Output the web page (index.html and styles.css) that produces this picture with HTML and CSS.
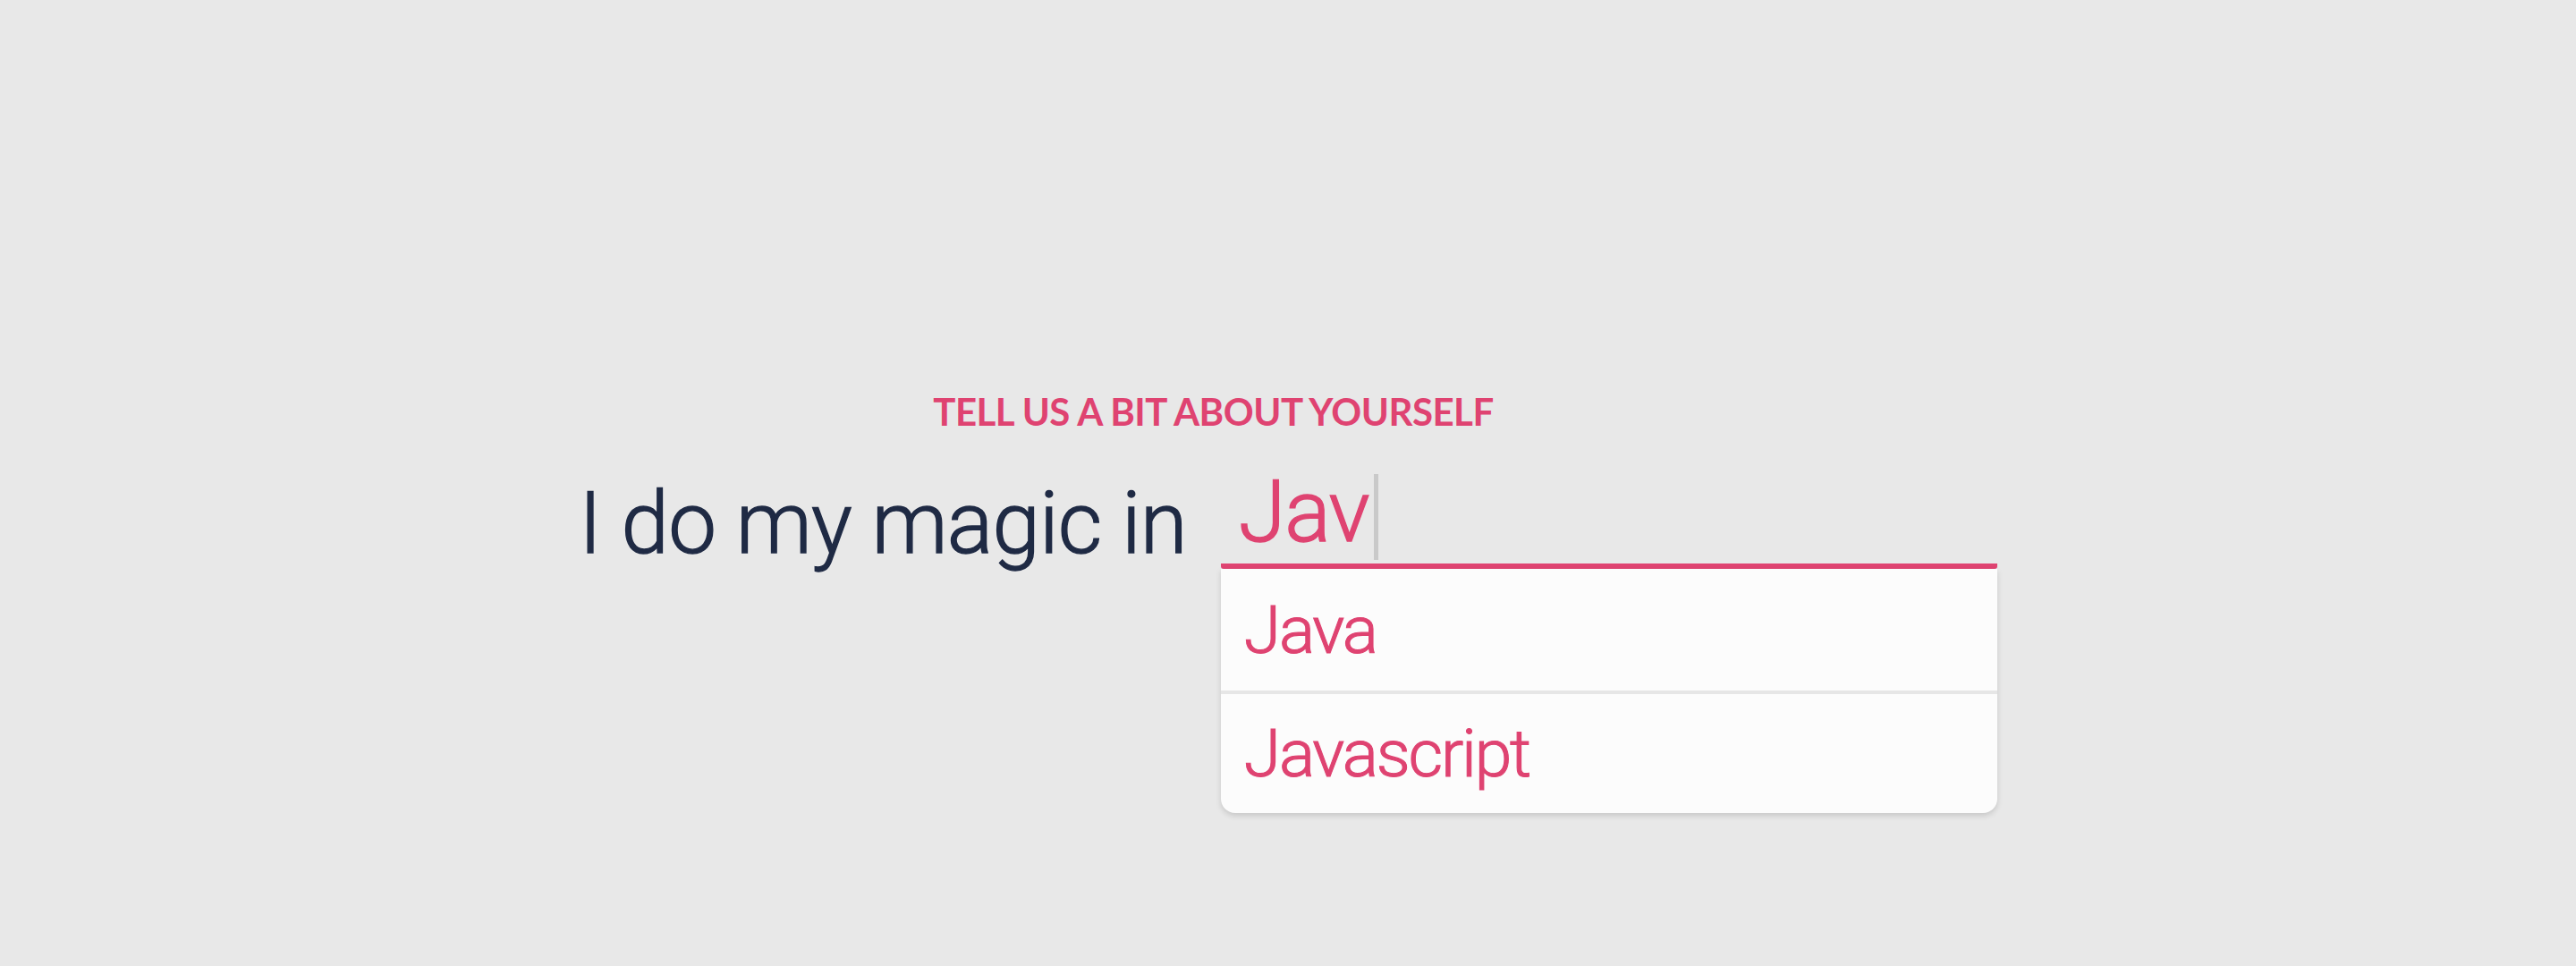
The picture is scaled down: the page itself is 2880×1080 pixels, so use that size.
FILE: index.html
```html
<!DOCTYPE html>
<html lang="en">
<head>
<meta charset="utf-8">
<title>Tell us a bit about yourself</title>
<link rel="stylesheet" href="styles.css">
</head>
<body>
<main class="page">
  <form class="form" onsubmit="return false">
    <label class="label" for="lang">TELL US A BIT ABOUT YOURSELF</label>
    <div class="row">
      <span class="sentence">I do my magic in</span>
      <div class="field">
        <div class="input-line" id="lang">
          <span class="typed">Jav</span><span class="caret"></span>
        </div>
        <ul class="dropdown">
          <li class="option">Java</li>
          <li class="option">Javascript</li>
        </ul>
      </div>
    </div>
  </form>
</main>
</body>
</html>
```
FILE: styles.css
```css
html, body {
  margin: 0;
  padding: 0;
}
body {
  background: #e8e8e8;
  width: 2880px;
  height: 1080px;
  overflow: hidden;
  font-family: Roboto, "Liberation Sans", sans-serif;
}
.page {
  display: flex;
  justify-content: center;
  padding-top: 440px;
}
.form {
  display: flex;
  flex-direction: column;
}
.label {
  align-self: flex-start;
  margin-left: 396px;
  font-family: Lato, "Open Sans", sans-serif;
  font-weight: 700;
  font-size: 42px;
  line-height: 40px;
  color: #df4371;
  letter-spacing: -0.5px;
}
.row {
  display: flex;
  align-items: flex-end;
  margin-top: 44px;
}
.sentence {
  font-weight: 300;
  font-size: 96px;
  line-height: 96px;
  color: #1f2a44;
  -webkit-text-stroke: 1.4px #1f2a44;
  padding-bottom: 3px;
  white-space: nowrap;
  letter-spacing: -0.8px;
}
.field {
  position: relative;
  width: 868px;
  margin-left: 38px;
}
.input-line {
  display: flex;
  align-items: flex-start;
  padding: 0 0 4px 20px;
  border-bottom: 6px solid #df4371;
  border-radius: 3px;
}
.typed {
  font-weight: 300;
  font-size: 96px;
  line-height: 96px;
  color: #df4371;
  -webkit-text-stroke: 1.4px #df4371;
  letter-spacing: -1.5px;
}
.caret {
  width: 5px;
  height: 96px;
  margin-top: 6px;
  margin-left: 6px;
  background: #c9c9c9;
}
.dropdown {
  position: absolute;
  top: 100%;
  left: 0;
  right: 0;
  margin: 0;
  padding: 0;
  list-style: none;
  background: #fcfcfc;
  border-radius: 0 0 16px 16px;
  box-shadow: 0 3px 6px rgba(0, 0, 0, 0.14);
}
.option {
  display: flex;
  align-items: center;
  height: 136px;
  padding-left: 26px;
  font-weight: 300;
  font-size: 75px;
  line-height: 75px;
  color: #df4371;
  -webkit-text-stroke: 1.1px #df4371;
  letter-spacing: -2.2px;
}
.option + .option {
  height: 133px;
  border-top: 4px solid #e6e6e6;
}
```
